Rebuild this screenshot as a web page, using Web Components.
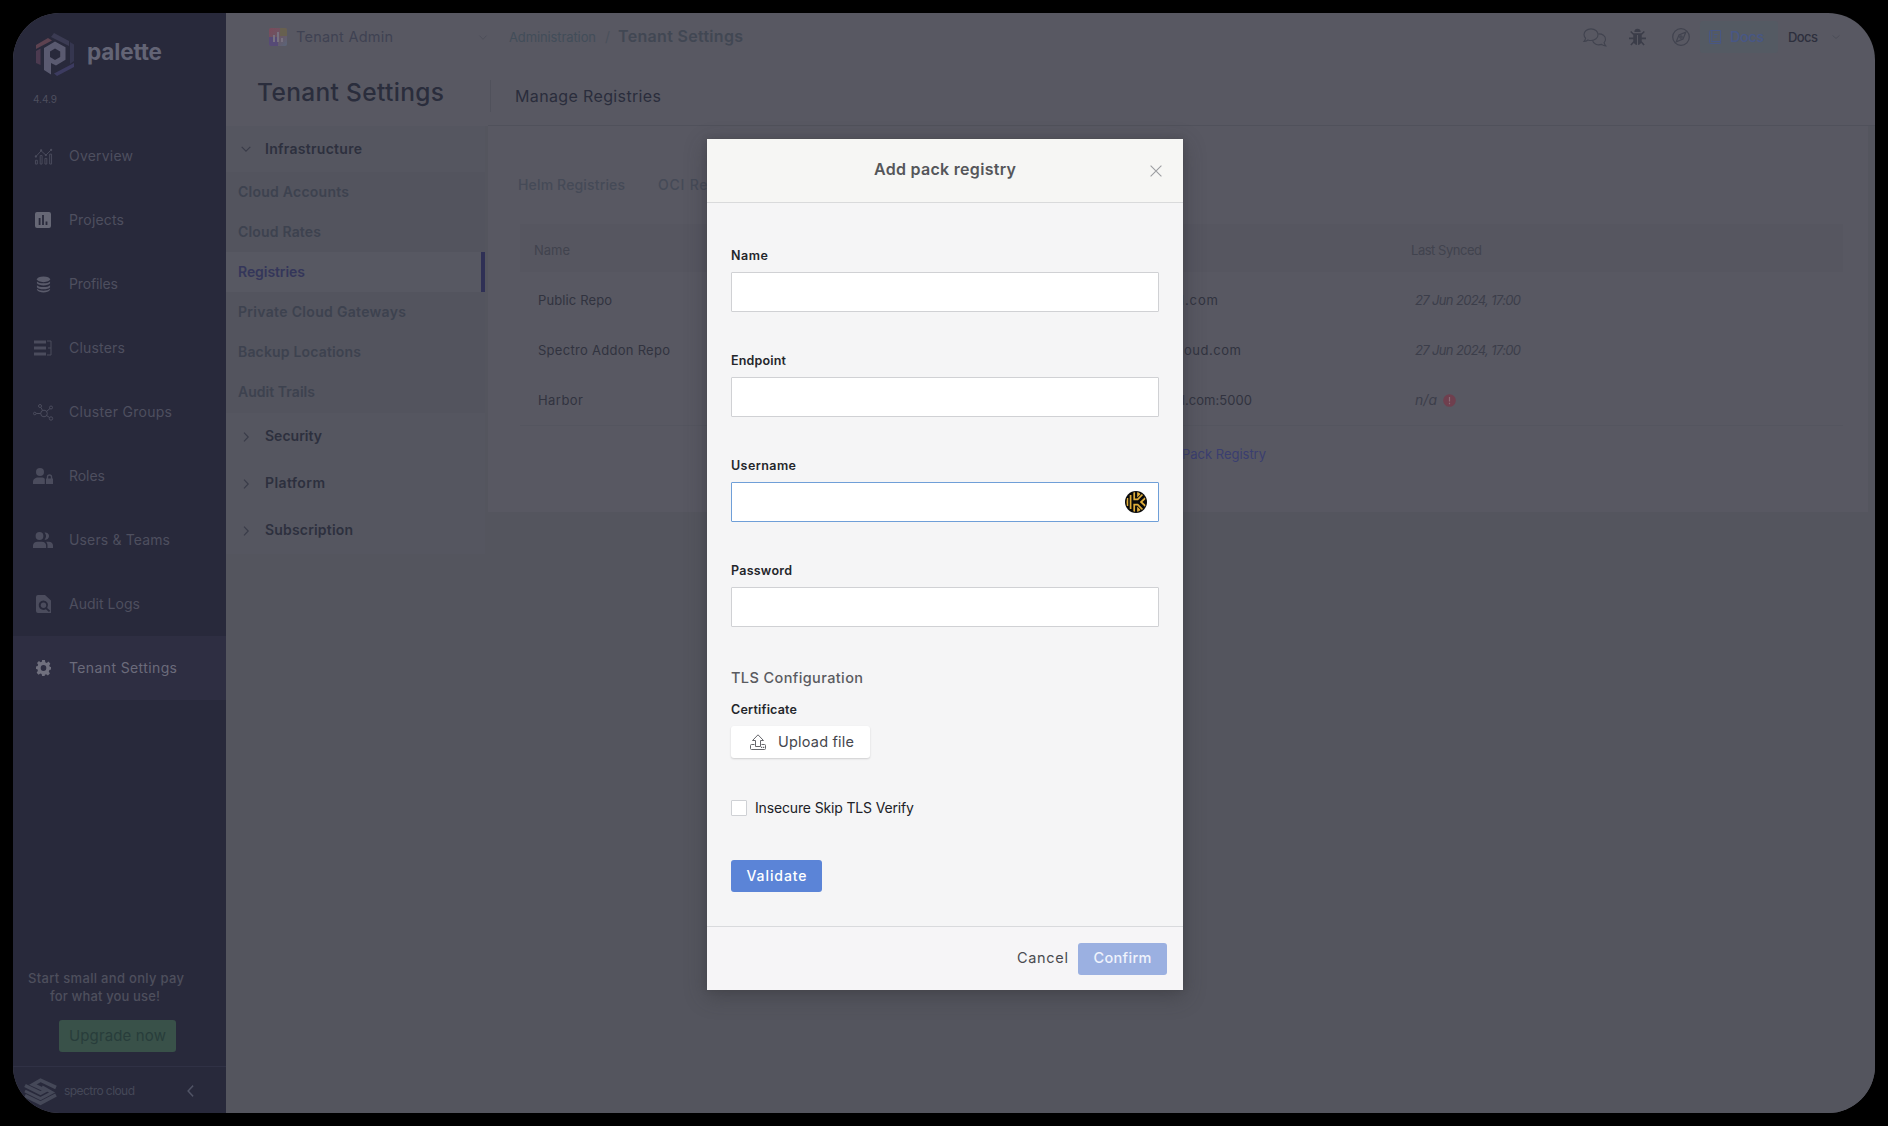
<!DOCTYPE html>
<html lang="en">
<head>
<meta charset="utf-8">
<title>Tenant Settings</title>
<style>
html,body{margin:0;height:100%;background:#000}
body{font-family:Inter,"Open Sans","Liberation Sans",sans-serif;overflow:hidden}
</style>
</head>
<body>
<app-shell></app-shell>
<script>
const define = (name, html, setup) => {
  const template = document.createElement('template');
  template.innerHTML = '<style>*{box-sizing:border-box}</style>' + html;
  customElements.define(name, class extends HTMLElement {
    connectedCallback() {
      if (this.shadowRoot) return;
      this.attachShadow({ mode: 'open' }).append(template.content.cloneNode(true));
      if (setup) setup.call(this, this.shadowRoot);
    }
  });
};

const ICONS = {
  palette: ['0 0 40 44', `<path d="M19 1l15 8v5L16 5z" fill="#3b3b53"/><path d="M35 10l4 2.5V29l-4 3z" fill="#35364f"/><path d="M39 31v4L22 44l-3-2.500z" fill="#3c3b60"/><path d="M1 13L13 6l4 2.500L1 17z" fill="#5d4250"/><path d="M1 19l4.500-2.500V33L1 31z" fill="#4c3a50"/><path fill-rule="evenodd" d="M20 9.500l10.500 5.800v12.500L21 33.500l-5-2.500v11.500L9 38V16zm0 7l-5 3v5.500l5 3 5.200-3v-5.500z" fill="#5a5a70"/>`],
  overview: ['0 0 20 18', `<g fill="none" stroke="currentColor" stroke-width="1"><path d="M1.500 17v-4h2v4zM6.500 17V8h2v9zM11.500 17v-6h2v6zM16.500 17V6.500h2V17z"/><path d="M2 9l5.500-6 5 4.500L18 2"/></g><circle cx="2" cy="9" r="1.200"/><circle cx="7.500" cy="2.500" r="1.200"/><circle cx="12.500" cy="7.500" r="1.200"/><circle cx="18" cy="2" r="1.200"/>`],
  projects: ['0 0 16 16', `<path fill-rule="evenodd" d="M2 0h12a2 2 0 012 2v12a2 2 0 01-2 2H2a2 2 0 01-2-2V2a2 2 0 012-2zm1.700 6v7h1.800V6zm3.400-3v10h1.800V3zm3.500 6.500V13h1.800V9.500z"/>`],
  profiles: ['0 0 16 18', `<ellipse cx="8" cy="3.500" rx="7" ry="3"/><path d="M1 5.800c2 2.600 12 2.600 14 0v2c-2 3-12 3-14 0zM1 9.800c2 2.600 12 2.600 14 0v2c-2 3-12 3-14 0zM1 13.600c2 2.600 12 2.600 14 0v1c-2 3.800-12 3.800-14 0z"/>`],
  clusters: ['0 0 18 16', `<path d="M0 .5h12v3H0zM0 6.500h12v3H0zM0 12.500h12v3H0z"/><path d="M13 1h4v14h-4M14 8h3" fill="none" stroke="currentColor"/>`],
  groups: ['0 0 20 17', `<g fill="none" stroke="currentColor"><circle cx="11" cy="9.500" r="3.300"/><circle cx="7" cy="2" r="1.500"/><circle cx="18" cy="3.500" r="1.500"/><circle cx="18" cy="14.500" r="1.700"/><circle cx="1.800" cy="9.500" r="1.300"/><path d="M8 3.500l1.500 3M13.500 7.500L17 4.500M13.500 11.500l3 2M3.200 9.500h4.500"/></g>`],
  roles: ['0 0 20 16', `<circle cx="7" cy="4" r="4"/><path d="M0 16v-2c0-3 2.500-4.500 5-4.500h3.500c1.500 0 2.500.5 3.300 1.200V16zM13 10.500h.8V9a2.700 2.700 0 015.400 0v1.500h.8V16h-7zm2.200 0h2.600V9a1.300 1.300 0 00-2.600 0z"/>`],
  users: ['0 0 20 16', `<circle cx="6.500" cy="4" r="3.900"/><path d="M11.500.5a3.700 3.700 0 110 7.200 5 5 0 000-7.200zM0 16v-2.500c0-2.500 2-3.800 4.300-3.800h4.500c2.500 0 4.300 1.300 4.300 3.800V16zM14.500 16v-2.500c0-1.500-.5-2.800-1.500-3.800h2.700c2.500 0 4.300 1.300 4.300 3.800V16z"/>`],
  audit: ['0 0 15 18', `<path fill-rule="evenodd" d="M2 0h7l6 5.500V18H2a2 2 0 01-2-2V2a2 2 0 012-2zm5.500 5.500a4.700 4.700 0 102.400 8.700L13 17l1.200-1.200-3-2.900A4.700 4.700 0 007.500 5.500z"/><circle cx="7.500" cy="10.200" r="2.700"/>`],
  gear: ['0 0 16 16', `<path fill-rule="evenodd" d="M6.500 0h3l.4 2.200 1.600.7L13.300 1.600l2 2.100-1.200 1.800.6 1.300L16 7v2.500l-1.700.5-.7 1.500 1.200 1.900-2.100 2-1.900-1.200-1.300.5L9.200 16H6.500L6 14l-1.300-.5-2 1.200-2-2 1.300-2L1.500 9.300 0 9V6.500L1.700 6l.6-1.300L1.100 3l2-2L5 2.200l1.200-.5zM8 5a3 3 0 100 6 3 3 0 000-6z"/>`],
  spectro: ['0 0 31 27', `<g fill="none" stroke="currentColor" stroke-width="3.600" stroke-linejoin="miter"><path d="M31 9.500L15.500 2.200 8 6.500 20.500 12.500 15.500 15.200 0 7.500"/><path d="M0 13l15.500 7.500L27 14.500 17 8.800" stroke-width="3"/><path d="M0 17.600l15.500 7.600L31 17"/></g>`],
  left: ['0 0 8 12', `<path d="M7 .7L1.300 6 7 11.300" fill="none" stroke="currentColor" stroke-width="1.600"/>`],
  right: ['0 0 6 10', `<path d="M1 .7L5.200 5 1 9.300" fill="none" stroke="currentColor" stroke-width="1.200"/>`],
  down: ['0 0 10 6', `<path d="M.7 .8L5 5.200 9.300 .8" fill="none" stroke="currentColor" stroke-width="1.200"/>`],
  tenant: ['0 0 18 18', `<defs><linearGradient id="g" x2="1" y2="1"><stop offset="0" stop-color="#7b4a5a"/><stop offset=".5" stop-color="#6a5563"/><stop offset="1" stop-color="#5a667a"/></linearGradient></defs><rect width="18" height="18" rx="2" fill="url(#g)"/><path d="M11 0h5a2 2 0 012 2v6h-7z" fill="#67604f"/><path d="M0 9h9v9H2a2 2 0 01-2-2z" fill="#564a76"/><path d="M4 7h2v7H4zM8 4h2v10H8zM12 10h2v4h-2z" fill="#77717f"/>`],
  chat: ['0 0 24 18', `<g fill="none" stroke="currentColor" stroke-width="1.100"><path d="M8 .8c4 0 7 2.400 7 5.500s-3 5.500-7 5.500c-1.100 0-2.100-.2-3-.5-1.200.9-2.500 1.400-4 1.400.9-1 1.500-2 1.600-3A5 5 0 011 6.300C1 3.200 4 .8 8 .8z"/><path d="M15.300 5.600c4.200-.2 7.200 2 7.200 5 0 1.200-.5 2.300-1.400 3.200.2 1.100.8 2.200 1.700 3.200-1.600 0-3-.6-4.200-1.500-4 1.200-8.300-.3-9.100-3.800"/></g>`],
  bug: ['0 0 18 18', `<path d="M5.700 4a3.300 3.300 0 016.600 0zM4.500 5.200h9v7.300a4.500 4.500 0 01-9 0z"/><path d="M1.800 3.500L5 6.500M16.200 3.500L13 6.500M0 10.300h5M18 10.300h-5M2 17l3.500-3.500M16 17l-3.500-3.500" stroke="currentColor" stroke-width="1.700"/><path d="M9 7v10" stroke="#585862" stroke-width="1"/>`],
  compass: ['0 0 18 18', `<g fill="none" stroke="currentColor" stroke-width="1.200"><circle cx="9" cy="9" r="8.300"/><path d="M13.800 4.200L11 11l-6.800 2.800L7 7z"/><circle cx="9" cy="9" r="1.200"/></g>`],
  book: ['0 0 13 14', `<g fill="none" stroke="currentColor"><path d="M.5 1.500a1 1 0 011-1h11v11M.5 1.500v11a1 1 0 001 1h11v-2h-10M3 .5v11M5.500 4.500h4M5.500 7h3"/></g>`],
  alert: ['0 0 13 13', `<circle cx="6.500" cy="6.500" r="6.300" fill="#6f3f4e"/><path d="M6.500 3v4.500M6.500 8.800v1.400" stroke="#8b6b76" stroke-width="1.200"/>`],
  close: ['0 0 12 12', `<path d="M.6 .6l10.800 10.800M11.400 .6L.6 11.400" stroke="currentColor" stroke-width="1.100"/>`],
  upload: ['0 0 16 16', `<g fill="none" stroke="currentColor"><path d="M5.500 12.500V6.500H2.500L8 .8l5.500 5.700h-3v6z"/><path d="M4.500 10.500h-3a1 1 0 00-1 1v3a1 1 0 001 1h13a1 1 0 001-1v-3a1 1 0 00-1-1h-3"/></g><path d="M11 12.700h1.300V14H11zM13 12.700h1.300V14H13z"/>`],
  keeper: ['0 0 22 22', `<defs><clipPath id="k"><circle cx="11" cy="11" r="10"/></clipPath></defs><circle cx="11" cy="11" r="11" fill="#0b0b0b"/><g clip-path="url(#k)" fill="none" stroke="#e0ae3a" stroke-width="1.700"><path d="M2.400 7v8M5.600 4v14M9.200 1v7.300h3.500L18 3M9.200 21v-7.300h3.500L18 19M13 0v4.500l2-2M13 22v-4.500l2 2M21 6.500L16 11l5 4.500"/></g>`]
};

define('ui-icon', `<style>:host{display:block;flex:none;line-height:0}svg{display:block;width:100%;height:100%;overflow:visible}</style>`, function (root) {
  const [box, body] = ICONS[this.getAttribute('name')];
  this.style.width = this.getAttribute('w') + 'px';
  this.style.height = this.getAttribute('h') + 'px';
  root.innerHTML += `<svg viewBox="${box}" fill="currentColor" preserveAspectRatio="none">${body}</svg>`;
});

define('nav-item', `<style>
:host{display:flex;align-items:center;height:64px;color:#4e4f5f}
:host([active]){background:#2e2e42;color:#6b6b7b}
:host([active]) .i{color:#70707e}
.i{width:60px;display:flex;justify-content:center;flex:none;color:#4b4c5d;margin-right:-4px}
</style><span class="i"><slot name="icon"></slot></span><slot></slot>`);

define('side-nav', `<style>
:host{display:flex;flex-direction:column;width:213px;flex:none;background:#28293b}
.brand{display:flex;align-items:center;height:81px;padding-left:22px;gap:12px;color:#636475}
.version{height:10px;padding-left:20px;display:flex;align-items:center;color:#4e4f5f}
nav{margin-top:20px;flex:1}
.promo{padding:0 0 14px 15px;color:#4e4f5d}
.line{display:flex;height:18px;align-items:center}
.second{padding-left:22px}
.cta{margin:15px 0 0 31px;width:117px;height:32px;border-radius:3px;background:#395149;color:#283d3b;display:flex;align-items:center;justify-content:center}
footer{height:47px;border-top:1px solid #303145;display:flex;align-items:center;padding:2px 0 0 12px;color:#454858}
.toggle{margin-left:52px;color:#505365}
</style>
<div class="brand"><ui-icon name="palette" w="40" h="44"></ui-icon><ui-text s="22.500" wt="700" w="75">palette</ui-text></div>
<div class="version"><ui-text s="10" w="24">4.4.9</ui-text></div>
<nav>
<nav-item><ui-icon slot="icon" name="overview" w="19" h="17"></ui-icon><ui-text w="64">Overview</ui-text></nav-item>
<nav-item><ui-icon slot="icon" name="projects" w="16" h="16" style="color:#666775"></ui-icon><ui-text w="55">Projects</ui-text></nav-item>
<nav-item><ui-icon slot="icon" name="profiles" w="15" h="17" style="color:#5a5b6b"></ui-icon><ui-text w="49">Profiles</ui-text></nav-item>
<nav-item><ui-icon slot="icon" name="clusters" w="18" h="16"></ui-icon><ui-text w="56">Clusters</ui-text></nav-item>
<nav-item><ui-icon slot="icon" name="groups" w="20" h="17"></ui-icon><ui-text w="103">Cluster Groups</ui-text></nav-item>
<nav-item><ui-icon slot="icon" name="roles" w="20" h="16"></ui-icon><ui-text w="36">Roles</ui-text></nav-item>
<nav-item><ui-icon slot="icon" name="users" w="20" h="16"></ui-icon><ui-text w="101">Users &amp; Teams</ui-text></nav-item>
<nav-item><ui-icon slot="icon" name="audit" w="15" h="18"></ui-icon><ui-text w="71">Audit Logs</ui-text></nav-item>
<nav-item active><ui-icon slot="icon" name="gear" w="15" h="16"></ui-icon><ui-text w="108">Tenant Settings</ui-text></nav-item>
</nav>
<div class="promo">
<div class="line"><ui-text s="13" wt="500" w="156">Start small and only pay</ui-text></div>
<div class="line second"><ui-text s="13" wt="500" w="110">for what you use!</ui-text></div>
<div class="cta"><ui-text s="15" w="97">Upgrade now</ui-text></div>
</div>
<footer><ui-icon name="spectro" w="31" h="27"></ui-icon><ui-text style="margin-left:8px" s="12" w="71">spectro cloud</ui-text><ui-icon class="toggle" name="left" w="7" h="12"></ui-icon></footer>`);

define('top-bar', `<style>
:host{display:flex;align-items:center;height:48px;color:#3f4252}
.tenant{display:flex;align-items:center;gap:9px;width:240px;margin-left:43px}
.tenant .c{margin-left:auto;margin-right:22px;color:#4d4e59}
.crumbs{display:flex;align-items:center;color:#424d59}
.tools{display:flex;align-items:center;margin-left:auto;color:#41434f}
.docs{display:flex;align-items:center;gap:9px;width:78px;height:32px;padding-left:9px;margin:0 10px 0 10px;background:#545a63;color:#485785;border-radius:3px}
</style>
<div class="tenant"><ui-icon name="tenant" w="18" h="18"></ui-icon><ui-text s="14.500" w="97">Tenant Admin</ui-text><ui-icon class="c" name="down" w="8" h="5"></ui-icon></div>
<div class="crumbs"><ui-text s="13" w="87">Administration</ui-text><ui-text s="14" style="margin:0 8px 0 9px;color:#4a505b">/</ui-text><ui-text s="16" wt="600" w="125" style="color:#414753">Tenant Settings</ui-text></div>
<div class="tools"><ui-icon name="chat" w="24" h="19" style="margin-right:22px"></ui-icon><ui-icon name="bug" w="17" h="18" style="margin-right:26px;color:#3b3d49"></ui-icon><ui-icon name="compass" w="18" h="18"></ui-icon>
<div class="docs"><ui-icon name="book" w="12" h="14"></ui-icon><ui-text s="14.500" wt="500" w="34">Docs</ui-text></div>
<ui-text s="13" wt="500" w="30" style="color:#2d2f3d">Docs</ui-text><ui-icon name="down" w="8" h="4" style="margin:0 35px 0 14px;color:#4a4c57"></ui-icon></div>`);

define('title-row', `<style>
:host{display:flex;height:65px;color:#2a2d3c}
.t{width:262px;padding:2px 0 0 31px;display:flex;align-items:center}
.m{flex:1;display:flex;align-items:center;border-bottom:1px solid #50515b}
.bar{width:1px;height:32px;background:#50515b;margin:6px 24px 0 2px}
.m ui-text{margin-top:7px}
</style>
<div class="t"><ui-text s="24.500" wt="500" w="187">Tenant Settings</ui-text></div><div class="m"><span class="bar"></span><ui-text s="16" w="146">Manage Registries</ui-text></div>`);

define('menu-group', `<style>
:host{display:block}
.h{display:flex;align-items:center;height:47px;color:#2d303e}
:host([open]) .h{height:46px}
:host([open]) .items{padding-bottom:1px}
.i{width:39px;display:flex;justify-content:center;color:#3a3c49}
.items{background:#53545e}
</style>
<div class="h"><span class="i"><slot name="icon"></slot></span><slot name="title"></slot></div><div class="items"><slot></slot></div>`);

define('menu-link', `<style>
:host{display:flex;align-items:center;height:40px;padding-left:12px;color:#3d424f}
:host([active]){background:#575862;color:#34365a;border-right:4px solid #2f3055}
</style><slot></slot>`);

define('settings-menu', `<style>
:host{display:block;width:259px;flex:none;background:#555660;align-self:flex-start}
</style>
<menu-group open><ui-icon slot="icon" name="down" w="10" h="6"></ui-icon><ui-text slot="title" wt="600" w="97">Infrastructure</ui-text>
<menu-link><ui-text wt="600" w="111">Cloud Accounts</ui-text></menu-link>
<menu-link><ui-text wt="600" w="83">Cloud Rates</ui-text></menu-link>
<menu-link active><ui-text wt="600" w="67">Registries</ui-text></menu-link>
<menu-link><ui-text wt="600" w="168">Private Cloud Gateways</ui-text></menu-link>
<menu-link><ui-text wt="600" w="123">Backup Locations</ui-text></menu-link>
<menu-link><ui-text wt="600" w="77">Audit Trails</ui-text></menu-link></menu-group>
<menu-group><ui-icon slot="icon" name="right" w="6" h="10"></ui-icon><ui-text slot="title" wt="600" w="57">Security</ui-text></menu-group>
<menu-group><ui-icon slot="icon" name="right" w="6" h="10"></ui-icon><ui-text slot="title" wt="600" w="60">Platform</ui-text></menu-group>
<menu-group><ui-icon slot="icon" name="right" w="6" h="10"></ui-icon><ui-text slot="title" wt="600" w="88">Subscription</ui-text></menu-group>`);

define('registry-row', `<style>
:host{display:grid;grid-template-columns:400px 491px 1fr;align-items:center;height:50px;color:#31333f;padding-left:18px}
:host([head]){height:48px;background:#565660;color:#41434e;padding:4px 0 0 14px;margin-bottom:3px}
.e{display:flex;justify-content:flex-end}
.s{display:flex;align-items:center;gap:6px;color:#3c3e4a;margin-left:-14px}
:host([head]) .s{color:inherit}
</style><slot name="name"></slot><span class="e"><slot name="end"></slot></span><span class="s"><slot></slot></span>`);

define('registry-panel', `<style>
:host{display:block;flex:1;height:386px;margin:0 7px 0 3px;background:#585862;padding:0 25px 0 32px}
.tabs{display:flex;align-items:center;height:40px;margin-top:39px;gap:33px;margin-left:-2px;color:#454a57}
.table{margin-top:19px;border-bottom:1px solid #54555f}
.add{display:flex;padding:17px 0 0 662px;color:#3a3e70}
</style>
<div class="tabs"><ui-text wt="500" w="107">Helm Registries</ui-text><ui-text wt="500" w="105">OCI Registries</ui-text></div>
<div class="table">
<registry-row head><ui-text slot="name" s="13" w="36">Name</ui-text><ui-text s="13" w="71">Last Synced</ui-text></registry-row>
<registry-row><ui-text slot="name" s="13" w="74">Public Repo</ui-text><ui-text slot="end" s="13" w="42" style="margin-right:211px">d.com</ui-text><ui-text s="13" w="106" it>27 Jun 2024, 17:00</ui-text></registry-row>
<registry-row><ui-text slot="name" s="13" w="132">Spectro Addon Repo</ui-text><ui-text slot="end" s="13" w="57" style="margin-right:188px">oud.com</ui-text><ui-text s="13" w="106" it>27 Jun 2024, 17:00</ui-text></registry-row>
<registry-row><ui-text slot="name" s="13" w="45">Harbor</ui-text><ui-text slot="end" s="13" w="75" style="margin-right:177px">d.com:5000</ui-text><ui-text s="14" w="22" it>n/a</ui-text><ui-icon name="alert" w="13" h="13"></ui-icon></registry-row>
</div>
<div class="add"><ui-text s="13" w="84">Pack Registry</ui-text></div>`);

define('form-field', `<style>
:host{display:block;margin-bottom:39px;color:#24262b}
.l{display:flex;align-items:center;height:20px;margin-bottom:6px}
.box{height:40px;background:#fff;border:1px solid #d0d1d4;border-radius:1px;display:flex;align-items:center;justify-content:flex-end;padding-right:11px}
:host([focused]) .box{border-color:#6f9fd8}
</style><div class="l"><slot></slot></div><div class="box"><slot name="adornment"></slot></div>`);

define('ui-button', `<style>
:host{display:inline-flex;align-items:center;justify-content:center;height:32px;border-radius:3px;color:#fff}
:host([kind=primary]){background:#5b84d7}
:host([kind=muted]){background:#9bb0e1;color:#eff3fc}
:host([kind=plain]){background:#fff;color:#45474d;box-shadow:0 1px 2px rgba(0,0,0,.16)}
:host([kind=text]){color:#4a4b50}
</style><slot></slot>`);

define('registry-dialog', `<style>
:host{position:absolute;left:694px;top:126px;width:476px;height:851px;display:flex;flex-direction:column;background:#f5f5f6;box-shadow:0 6px 20px rgba(50,50,56,.45),0 0 5px rgba(60,60,66,.35)}
header{height:64px;border-bottom:1px solid #d9dadb;display:flex;align-items:center;padding:0 21px 0 33px;color:#55565a;background:#f6f6f4}
header .t{flex:1;display:flex;justify-content:center;margin-top:-1px}
.body{flex:1;padding:43px 24px 0;display:flex;flex-direction:column}
.line{display:flex;align-items:center;height:20px}
.check{display:flex;gap:8px;align-items:center;height:20px;margin:40px 0 42px;color:#202127}
.boxy{width:16px;height:16px;border:1px solid #cfd1d5;background:#fff;border-radius:1px}
footer{height:64px;border-top:1px solid #d9dadd;display:flex;justify-content:flex-end;align-items:center;padding-right:16px;gap:10px;background:#f6f5f7}
</style>
<header><div class="t"><ui-text s="16" wt="600" w="142">Add pack registry</ui-text></div><ui-icon name="close" w="12" h="12" style="color:#9d9ea1"></ui-icon></header>
<div class="body">
<form-field><ui-text s="12.500" wt="600" w="37">Name</ui-text></form-field>
<form-field><ui-text s="12.500" wt="600" w="55">Endpoint</ui-text></form-field>
<form-field focused><ui-text s="12.500" wt="600" w="65">Username</ui-text><ui-icon slot="adornment" name="keeper" w="22" h="22"></ui-icon></form-field>
<form-field style="margin-bottom:41px"><ui-text s="12.500" wt="600" w="61">Password</ui-text></form-field>
<div class="line" style="color:#5a5b60;margin-bottom:12px"><ui-text s="14.500" wt="500" w="132">TLS Configuration</ui-text></div>
<div class="line" style="color:#24262b;margin-bottom:6px"><ui-text s="12.500" wt="600" w="66">Certificate</ui-text></div>
<ui-button kind="plain" style="width:139px;align-self:flex-start"><ui-icon name="upload" w="16" h="16" style="margin-right:12px;margin-left:3px;color:#66676c"></ui-icon><ui-text s="14.500" w="76">Upload file</ui-text></ui-button>
<div class="check"><span class="boxy"></span><ui-text w="159">Insecure Skip TLS Verify</ui-text></div>
<ui-button kind="primary" style="width:91px;align-self:flex-start"><ui-text wt="500" w="60">Validate</ui-text></ui-button>
</div>
<footer><ui-button kind="text"><ui-text s="14.500" w="51">Cancel</ui-text></ui-button><ui-button kind="muted" style="width:89px"><ui-text s="14.500" wt="500" w="58">Confirm</ui-text></ui-button></footer>`);

define('app-shell', `<style>
:host{display:flex;position:relative;width:1862px;height:1100px;margin:13px 0 0 13px}
.win{flex:1;display:flex;border-radius:47px;overflow:hidden;background:#585862}
main{flex:1;display:flex;flex-direction:column}
.content{flex:1;display:flex;align-items:flex-start;background:#54555e}
</style>
<div class="win"><side-nav></side-nav><main><top-bar></top-bar><title-row></title-row><div class="content"><settings-menu></settings-menu><registry-panel></registry-panel></div></main></div>
<registry-dialog></registry-dialog>`);

// Single-line label whose tracking is tuned to fill a given width.
define('ui-text', `<style>:host{display:block;flex:none;white-space:nowrap;line-height:20px;padding-bottom:2px}span{display:inline-block}</style><span><slot></slot></span>`, function (root) {
  const span = root.querySelector('span');
  span.style.fontSize = (this.getAttribute('s') || 14) + 'px';
  span.style.fontWeight = this.getAttribute('wt') || 400;
  if (this.hasAttribute('it')) span.style.fontStyle = 'italic';
  const width = +this.getAttribute('w');
  if (!width) return;
  const gap = (width - span.getBoundingClientRect().width) / (this.textContent.length - 1);
  span.style.letterSpacing = gap + 'px';
  span.style.marginRight = -gap + 'px';
});
</script>
</body>
</html>
